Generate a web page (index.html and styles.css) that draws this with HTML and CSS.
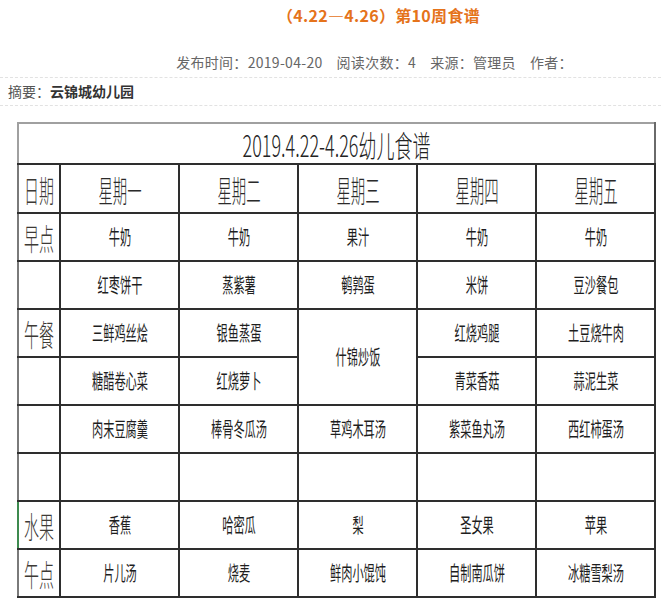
FILE: index.html
```html
<!DOCTYPE html>
<html lang="zh-CN">
<head>
<meta charset="utf-8">
<title>第10周食谱</title>
<link rel="stylesheet" href="styles.css">
</head>
<body>
<div class="page">
  <h1 class="article-title">（4.22—4.26）第10周食谱</h1>
  <div class="meta">发布时间：2019-04-20<span class="gap"></span>阅读次数：4<span class="gap"></span>来源：管理员<span class="gap"></span>作者：</div>
  <div class="summary">摘要：<b>云锦城幼儿园</b></div>
  <table class="menu">
    <colgroup>
      <col class="c-label"><col class="c-day"><col class="c-day"><col class="c-day"><col class="c-day"><col class="c-day">
    </colgroup>
    <tr class="r-title"><td colspan="6" class="title-cell"><span class="t">2019.4.22-4.26幼儿食谱</span></td></tr>
    <tr class="r-head">
      <td class="lab"><span class="l">日期</span></td>
      <td><span class="h">星期一</span></td>
      <td><span class="h">星期二</span></td>
      <td><span class="h">星期三</span></td>
      <td><span class="h">星期四</span></td>
      <td><span class="h">星期五</span></td>
    </tr>
    <tr>
      <td class="lab"><span class="l">早点</span></td>
      <td><span class="i">牛奶</span></td>
      <td><span class="i">牛奶</span></td>
      <td><span class="i">果汁</span></td>
      <td><span class="i">牛奶</span></td>
      <td><span class="i">牛奶</span></td>
    </tr>
    <tr>
      <td class="lab"></td>
      <td><span class="i">红枣饼干</span></td>
      <td><span class="i">蒸紫薯</span></td>
      <td><span class="i">鹌鹑蛋</span></td>
      <td><span class="i">米饼</span></td>
      <td><span class="i">豆沙餐包</span></td>
    </tr>
    <tr>
      <td class="lab"><span class="l">午餐</span></td>
      <td><span class="i">三鲜鸡丝烩</span></td>
      <td><span class="i">银鱼蒸蛋</span></td>
      <td rowspan="2"><span class="i">什锦炒饭</span></td>
      <td><span class="i">红烧鸡腿</span></td>
      <td><span class="i">土豆烧牛肉</span></td>
    </tr>
    <tr>
      <td class="lab"></td>
      <td><span class="i">糖醋卷心菜</span></td>
      <td><span class="i">红烧萝卜</span></td>
      <td><span class="i">青菜香菇</span></td>
      <td><span class="i">蒜泥生菜</span></td>
    </tr>
    <tr>
      <td class="lab"></td>
      <td><span class="i">肉末豆腐羹</span></td>
      <td><span class="i">棒骨冬瓜汤</span></td>
      <td><span class="i">草鸡木耳汤</span></td>
      <td><span class="i">紫菜鱼丸汤</span></td>
      <td><span class="i">西红柿蛋汤</span></td>
    </tr>
    <tr>
      <td class="lab"></td><td></td><td></td><td></td><td></td><td></td>
    </tr>
    <tr>
      <td class="lab sel"><span class="l">水果</span></td>
      <td><span class="i">香蕉</span></td>
      <td><span class="i">哈密瓜</span></td>
      <td><span class="i">梨</span></td>
      <td><span class="i">圣女果</span></td>
      <td><span class="i">苹果</span></td>
    </tr>
    <tr>
      <td class="lab"><span class="l">午点</span></td>
      <td><span class="i">片儿汤</span></td>
      <td><span class="i">烧麦</span></td>
      <td><span class="i">鲜肉小馄饨</span></td>
      <td><span class="i">自制南瓜饼</span></td>
      <td><span class="i">冰糖雪梨汤</span></td>
    </tr>
  </table>
</div>
</body>
</html>
```
FILE: styles.css
```css
html, body {
  margin: 0;
  padding: 0;
  background: #fff;
}
body {
  font-family: "Noto Sans CJK SC", "Noto Sans", sans-serif;
  color: #333;
}
.page {
  width: 661px;
}
.article-title {
  margin: 3px 0 0 0;
  padding-left: 96px;
  text-align: center;
  font-size: 16px;
  line-height: 24px;
  font-weight: bold;
  letter-spacing: 0.3px;
  color: #e5731b;
}
.meta {
  margin-top: 23px;
  padding-left: 88px;
  text-align: center;
  font-size: 14px;
  line-height: 24px;
  letter-spacing: 0.3px;
  color: #666;
}
.gap {
  display: inline-block;
  width: 14px;
}
.summary {
  margin-top: 3px;
  border-top: 1px dashed #e2e2e2;
  border-bottom: 1px dashed #e2e2e2;
  padding-left: 8px;
  font-size: 14px;
  line-height: 27px;
  color: #555;
}
.summary b {
  color: #333;
}
.menu {
  margin: 16px 0 0 17px;
  border-collapse: collapse;
  table-layout: fixed;
  width: 639px;
}
.c-label { width: 42px; }
.c-day { width: 119px; }
.menu td {
  border: 2px solid #2e2e2e;
  padding: 0;
  height: 46px;
  text-align: center;
  vertical-align: middle;
  line-height: 1;
  white-space: nowrap;
}
.menu .r-title td {
  height: 39px;
  border-top: 2px solid #a0a0a0;
  border-left: 2px solid #a0a0a0;
  border-right: 2px solid #6a6a6a;
}
.menu .r-head td {
  height: 47px;
}
.menu td.lab {
  border-left: 2px solid #7a7a7a;
}
.menu td.lab.sel {
  border-left: 2px solid #3d8a4f;
}
.t, .h, .l, .i {
  display: inline-block;
  transform-origin: center center;
}
.t {
  font-size: 30px;
  font-weight: 300;
  color: #222;
  transform: scaleX(0.6);
}
.h {
  font-size: 30px;
  font-weight: 300;
  color: #2a2a2a;
  transform: scaleX(0.48);
}
.l {
  font-size: 30px;
  font-weight: 300;
  color: #3d3a36;
  margin: 0 -15px;
  transform: scaleX(0.5);
}
.i {
  font-size: 20px;
  color: #1e1e1e;
  transform: scaleX(0.56);
}
```
